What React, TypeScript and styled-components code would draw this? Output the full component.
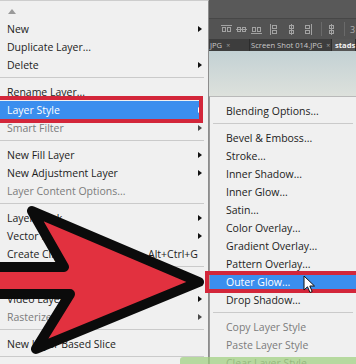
import styled, { createGlobalStyle } from 'styled-components'

const GlobalStyle = createGlobalStyle`
	html, body {
		margin: 0;
		padding: 0;
	}
	body {
		width: 356px;
		height: 364px;
		overflow: hidden;
		background: #f0f0f0;
		font-family: 'Open Sans', 'Noto Sans', sans-serif;
	}
`

type Entry = {
	label?: string
	sub?: boolean
	disabled?: boolean
	shortcut?: string
	active?: boolean
	sep?: boolean
}

const MAIN: Entry[] = [
	{ label: 'New', sub: true },
	{ label: 'Duplicate Layer...' },
	{ label: 'Delete', sub: true },
	{ sep: true },
	{ label: 'Rename Layer...' },
	{ label: 'Layer Style', sub: true, active: true },
	{ label: 'Smart Filter', sub: true, disabled: true },
	{ sep: true },
	{ label: 'New Fill Layer', sub: true },
	{ label: 'New Adjustment Layer', sub: true },
	{ label: 'Layer Content Options...', disabled: true },
	{ sep: true },
	{ label: 'Layer Mask', sub: true },
	{ label: 'Vector Mask', sub: true },
	{ label: 'Create Clipping Mask', shortcut: 'Alt+Ctrl+G' },
	{ sep: true },
	{ label: 'Smart Objects', sub: true },
	{ label: 'Video Layers', sub: true },
	{ label: 'Rasterize', sub: true, disabled: true },
	{ sep: true },
	{ label: 'New Layer Based Slice' },
	{ sep: true },
]

const STYLES: Entry[] = [
	{ label: 'Blending Options...' },
	{ sep: true },
	{ label: 'Bevel & Emboss...' },
	{ label: 'Stroke...' },
	{ label: 'Inner Shadow...' },
	{ label: 'Inner Glow...' },
	{ label: 'Satin...' },
	{ label: 'Color Overlay...' },
	{ label: 'Gradient Overlay...' },
	{ label: 'Pattern Overlay...' },
	{ label: 'Outer Glow...', active: true },
	{ label: 'Drop Shadow...' },
	{ sep: true },
	{ label: 'Copy Layer Style', disabled: true },
	{ label: 'Paste Layer Style', disabled: true },
	{ label: 'Clear Layer Style', disabled: true },
]

const Screen = styled.div`
	position: relative;
	width: 356px;
	height: 364px;
	overflow: hidden;
	display: flex;
`

const MainMenu = styled.div`
	width: 209px;
	flex: none;
	box-sizing: border-box;
	background: #f0f0f0;
	border-top: 1px solid #cdcdcd;
	border-right: 1px solid #8c8c8c;
	padding-top: 1px;
	display: flex;
	flex-direction: column;
`

const ScrollUp = styled.div`
	flex: none;
	height: 18px;
	display: flex;
	align-items: center;
	padding-left: 8px;

	&::before {
		content: '';
		border-left: 4px solid transparent;
		border-right: 4px solid transparent;
		border-bottom: 5px solid #9a9a9a;
	}
`

const Item = styled.div<{ $disabled?: boolean; $active?: boolean; $inset: number }>`
	position: relative;
	flex: none;
	height: 18px;
	display: flex;
	align-items: center;
	padding: 0 6px 0 ${(p) => p.$inset}px;
	font-size: 10.5px;
	white-space: nowrap;
	color: ${(p) => (p.$active ? '#ffffff' : p.$disabled ? '#7b7b7b' : '#1c1c1c')};
	background: ${(p) => (p.$active ? '#3b8eee' : 'transparent')};
	z-index: ${(p) => (p.$active ? 2 : 0)};
`

const MainActive = styled(Item)`
	margin-right: 5px;
	padding-right: 1px;

	&::before {
		content: '';
		position: absolute;
		top: -5px;
		bottom: -4px;
		left: -4px;
		right: 0;
		border: 4px solid #d3263a;
	}
`

const StyleActive = styled(Item)`
	&::before {
		content: '';
		position: absolute;
		top: -2px;
		bottom: -2px;
		left: -5px;
		right: -4px;
		border: 4px solid #d3263a;
	}
`

const SubArrow = styled.span<{ $light?: boolean; $dim?: boolean }>`
	margin-left: auto;
	width: 0;
	height: 0;
	border-top: 3.5px solid transparent;
	border-bottom: 3.5px solid transparent;
	border-left: 4px solid ${(p) => (p.$light ? '#ffffff' : p.$dim ? '#4a4a4a' : '#111111')};
`

const Shortcut = styled.span`
	margin-left: auto;
	margin-right: 4px;
`

const Separator = styled.div<{ $side: number }>`
	flex: none;
	height: 9px;
	padding-top: 3px;
	box-sizing: border-box;
	margin: 0 ${(p) => p.$side}px 0 ${(p) => (p.$side > 3 ? 0 : p.$side)}px;

	&::before {
		content: '';
		display: block;
		height: 1px;
		background: #cacaca;
	}
`

const Side = styled.div`
	flex: 1;
	min-width: 0;
	display: flex;
	flex-direction: column;
`

const TopBar = styled.div`
	flex: none;
	height: 18px;
	background: #595959;
	border-bottom: 1px solid #474747;
`

const Toolbar = styled.div`
	flex: none;
	height: 20px;
	background: #535353;
	display: flex;
	align-items: center;
	padding-left: 12px;
	color: #a2a2a2;
`

const ToolIcon = styled.svg<{ $gap: number }>`
	flex: none;
	margin-right: ${(p) => p.$gap}px;
`

const ToolDivider = styled.span`
	flex: none;
	width: 1px;
	height: 14px;
	background: #6a6a6a;
	margin: 0 5px 0 0;
`

const ToolText = styled.span`
	font-size: 9px;
	color: #b0b0b0;
`

const TabBar = styled.div`
	flex: none;
	height: 12px;
	background: #3d3d3d;
	display: flex;
	font-size: 7.6px;
	color: #c9c9c9;
	white-space: nowrap;
	overflow: hidden;
`

const Tab = styled.div<{ $current?: boolean; $w: number }>`
	flex: none;
	width: ${(p) => p.$w}px;
	display: flex;
	align-items: center;
	gap: 4px;
	padding-left: ${(p) => (p.$current ? 3 : 1)}px;
	box-sizing: border-box;
	background: ${(p) => (p.$current ? '#555555' : 'transparent')};
	color: ${(p) => (p.$current ? '#f2f2f2' : '#c9c9c9')};
	font-weight: ${(p) => (p.$current ? 700 : 400)};
	border-right: 1px solid #2c2c2c;
`

const Close = styled.span`
	font-size: 7px;
	color: #9a9a9a;
`

const Canvas = styled.div`
	flex: none;
	height: 45px;
	background: linear-gradient(#c3d1d4, #dde1dc);
`

const StyleMenu = styled.div`
	flex: 1;
	background: #f0f0f0;
	border-left: 1px solid #9a9a9a;
	border-top: 1px solid #b9b9b9;
	padding-top: 5px;
	display: flex;
	flex-direction: column;
`

const ArrowOverlay = styled.svg`
	position: absolute;
	left: 0;
	top: 0;
	z-index: 5;
	pointer-events: none;
`

const Cursor = styled.svg`
	position: absolute;
	left: 303px;
	top: 275px;
	z-index: 4;
`

const Caption = styled.div`
	position: absolute;
	left: 180px;
	top: 357px;
	right: 0;
	bottom: 0;
	border-radius: 3px 0 0 0;
	background: rgba(160, 208, 128, 0.72);
	z-index: 3;
`

const AlignH = ({ gap, variant }: { gap: number; variant: number }) => (
	<ToolIcon $gap={gap} width="11" height="9" viewBox="0 0 11 9" fill="currentColor">
		<rect x="0" y={variant === 0 ? 0 : variant === 1 ? 4 : 8} width="11" height="1" />
		<rect x="1.5" y="2.5" width="3" height="4" fill="none" stroke="currentColor" />
		<rect x="6.5" y="2.5" width="3" height="4" fill="none" stroke="currentColor" />
	</ToolIcon>
)

const AlignV = ({ gap, variant }: { gap: number; variant: number }) => (
	<ToolIcon $gap={gap} width="9" height="11" viewBox="0 0 9 11" fill="currentColor">
		<rect x={variant === 0 ? 0 : variant === 1 ? 4 : 8} y="0" width="1" height="11" />
		<rect x="2.5" y="1.5" width="4" height="3" fill="none" stroke="currentColor" />
		<rect x="2.5" y="6.5" width="4" height="3" fill="none" stroke="currentColor" />
	</ToolIcon>
)

const renderItems = (items: Entry[], inset: number, side: number, sub: boolean) =>
	items.map((it, i) => {
		if (it.sep) return <Separator key={i} $side={side} />
		const Row = it.active ? (sub ? StyleActive : MainActive) : Item
		return (
			<Row key={i} $inset={inset} $active={it.active} $disabled={it.disabled}>
				{it.label}
				{it.shortcut && <Shortcut>{it.shortcut}</Shortcut>}
				{it.sub && <SubArrow $light={it.active} $dim={it.disabled} />}
			</Row>
		)
	})

const App = () => {
	return (
		<Screen>
			<GlobalStyle />
			<MainMenu>
				<ScrollUp />
				{renderItems(MAIN, 7, 4, false)}
			</MainMenu>
			<Side>
				<TopBar />
				<Toolbar>
					<AlignH gap={4} variant={0} />
					<AlignH gap={4} variant={1} />
					<AlignH gap={8} variant={2} />
					<AlignV gap={8} variant={0} />
					<AlignV gap={7} variant={1} />
					<AlignV gap={9} variant={2} />
					<ToolDivider />
					<AlignV gap={8} variant={1} />
					<ToolDivider />
					<ToolText>3</ToolText>
				</Toolbar>
				<TabBar>
					<Tab $w={41}>
						JPG <Close>×</Close>
					</Tab>
					<Tab $w={82}>
						Screen Shot 014.JPG <Close>×</Close>
					</Tab>
					<Tab $w={24} $current>
						stads
					</Tab>
				</TabBar>
				<Canvas />
				<StyleMenu>{renderItems(STYLES, 16, 3, true)}</StyleMenu>
			</Side>

			<Cursor width="13" height="19" viewBox="0 0 13 19">
				<path
					d="M1 1 L1 15 L4.5 11.8 L7 17.5 L9.2 16.5 L6.8 11 L11.5 11 Z"
					fill="#ffffff"
					stroke="#111111"
					strokeWidth="1"
					strokeLinejoin="round"
				/>
			</Cursor>

			<ArrowOverlay width="356" height="364" viewBox="0 0 356 364">
				<polygon
					points="199,282 32,211 64,267 -20,267 -20,294 70,294 36,349"
					fill="#e2313f"
					stroke="#0b0b0b"
					strokeWidth="10"
					strokeLinejoin="round"
				/>
			</ArrowOverlay>

			<Caption />
		</Screen>
	)
}

export default App
